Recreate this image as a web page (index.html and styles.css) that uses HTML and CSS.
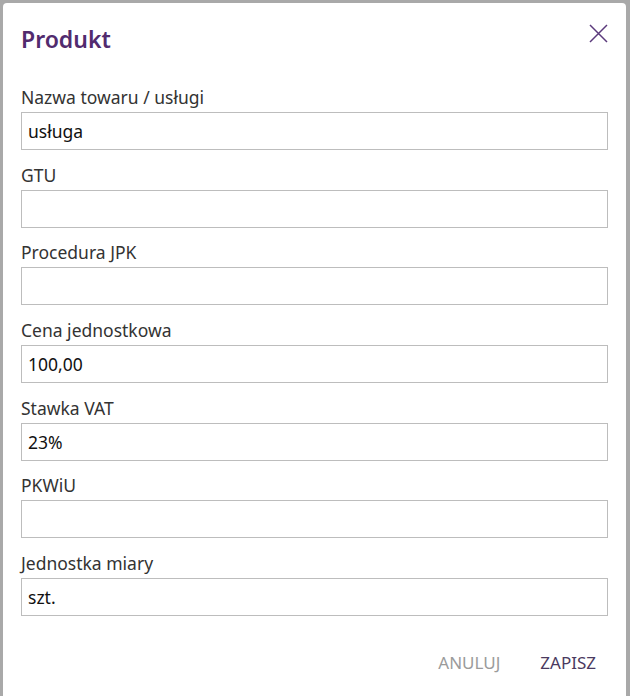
FILE: index.html
```html
<!DOCTYPE html>
<html lang="pl">
<head>
    <meta charset="UTF-8">
    <meta name="viewport" content="width=device-width, initial-scale=1.0">
    <title>Produkt</title>
    <link rel="stylesheet" href="styles.css">
</head>
<body>
    <div class="modal">
        <div class="modal-header">
            <h2>Produkt</h2>
            <button class="close" aria-label="Zamknij">
                <svg width="19" height="19" viewBox="0 0 19 19">
                    <path d="M1 1 L18 18 M18 1 L1 18" stroke="#5b3a7c" stroke-width="1.5" fill="none"/>
                </svg>
            </button>
        </div>

        <form class="fields">
            <div class="field">
                <label for="name">Nazwa towaru / usługi</label>
                <input id="name" type="text" value="usługa">
            </div>
            <div class="field">
                <label for="gtu">GTU</label>
                <input id="gtu" type="text">
            </div>
            <div class="field">
                <label for="jpk">Procedura JPK</label>
                <input id="jpk" type="text">
            </div>
            <div class="field">
                <label for="price">Cena jednostkowa</label>
                <input id="price" type="text" value="100,00">
            </div>
            <div class="field">
                <label for="vat">Stawka VAT</label>
                <input id="vat" type="text" value="23%">
            </div>
            <div class="field">
                <label for="pkwiu">PKWiU</label>
                <input id="pkwiu" type="text">
            </div>
            <div class="field">
                <label for="unit">Jednostka miary</label>
                <input id="unit" type="text" value="szt.">
            </div>
        </form>

        <div class="actions">
            <button class="btn btn-cancel">ANULUJ</button>
            <button class="btn btn-save">ZAPISZ</button>
        </div>
    </div>
</body>
</html>
```

FILE: styles.css
```css
html, body {
    height: 100%;
}
body {
    margin: 0;
    padding: 3px 4px 0 3px;
    box-sizing: border-box;
    background-color: #a9a9a9;
    font-family: "Noto Sans", "Open Sans", sans-serif;
    color: #333;
}
.modal {
    background: #fff;
    border-radius: 4px 4px 0 0;
    height: 100%;
    padding: 0 18px;
    box-sizing: border-box;
}
.modal-header {
    display: flex;
    justify-content: space-between;
    align-items: flex-start;
    padding-top: 22px;
}
.modal-header h2 {
    margin: 0;
    font-size: 23px;
    line-height: 28px;
    font-weight: 600;
    color: #522b6e;
}
.close {
    background: none;
    border: none;
    padding: 0;
    margin: -1px 0 0 0;
    cursor: pointer;
    line-height: 0;
}
.fields {
    display: flex;
    flex-direction: column;
    gap: 14.7px;
    margin-top: 34px;
}
.field {
    display: flex;
    flex-direction: column;
}
.field label {
    font-size: 17.5px;
    line-height: 20px;
    color: #333;
    margin-bottom: 5px;
}
.field input {
    height: 38px;
    box-sizing: border-box;
    border: 1px solid #bdbdbd;
    border-radius: 0;
    padding: 0 6px;
    font-family: inherit;
    font-size: 17.5px;
    color: #111;
    outline: none;
}
.actions {
    display: flex;
    justify-content: flex-end;
    gap: 18px;
    margin-top: 29px;
}
.btn {
    background: none;
    border: none;
    font-family: inherit;
    font-size: 17px;
    padding: 6px 12px 6px 10px;
    cursor: pointer;
}
.btn-cancel {
    color: #9b9b9b;
}
.btn-save {
    color: #4a3a60;
}
```
